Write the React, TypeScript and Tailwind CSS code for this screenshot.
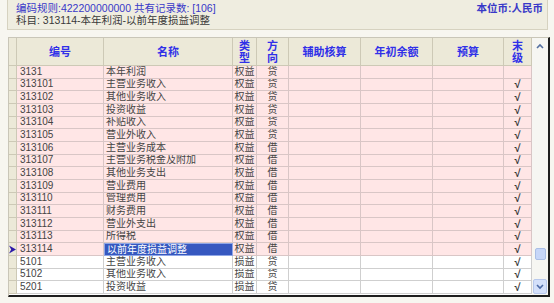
import React from "react";

type Row = { code: string; name: string; type: string; dir: string; leaf: boolean; pink: boolean };

const rows: Row[] = [
  { code: "3131", name: "本年利润", type: "权益", dir: "贷", leaf: false, pink: true },
  { code: "313101", name: "主营业务收入", type: "权益", dir: "贷", leaf: true, pink: true },
  { code: "313102", name: "其他业务收入", type: "权益", dir: "贷", leaf: true, pink: true },
  { code: "313103", name: "投资收益", type: "权益", dir: "贷", leaf: true, pink: true },
  { code: "313104", name: "补贴收入", type: "权益", dir: "贷", leaf: true, pink: true },
  { code: "313105", name: "营业外收入", type: "权益", dir: "贷", leaf: true, pink: true },
  { code: "313106", name: "主营业务成本", type: "权益", dir: "借", leaf: true, pink: true },
  { code: "313107", name: "主营业务税金及附加", type: "权益", dir: "借", leaf: true, pink: true },
  { code: "313108", name: "其他业务支出", type: "权益", dir: "借", leaf: true, pink: true },
  { code: "313109", name: "营业费用", type: "权益", dir: "借", leaf: true, pink: true },
  { code: "313110", name: "管理费用", type: "权益", dir: "借", leaf: true, pink: true },
  { code: "313111", name: "财务费用", type: "权益", dir: "借", leaf: true, pink: true },
  { code: "313112", name: "营业外支出", type: "权益", dir: "借", leaf: true, pink: true },
  { code: "313113", name: "所得税", type: "权益", dir: "借", leaf: true, pink: true },
  { code: "313114", name: "以前年度损益调整", type: "权益", dir: "借", leaf: true, pink: true },
  { code: "5101", name: "主营业务收入", type: "损益", dir: "贷", leaf: true, pink: false },
  { code: "5102", name: "其他业务收入", type: "损益", dir: "贷", leaf: true, pink: false },
  { code: "5201", name: "投资收益", type: "损益", dir: "贷", leaf: true, pink: false },
];

const cols = "grid grid-cols-[8px_87px_129px_24px_32px_72px_72px_71px_28px]";

function HeadCell({ children }: { children?: React.ReactNode }) {
  return (
    <div className="flex items-center justify-center border-r border-b border-[#cdc9b6] bg-[#ece9d8] text-center text-[11px] leading-[12px] font-bold text-[#3030e8]">
      {children}
    </div>
  );
}

export default function App() {
  return (
    <div
      className="w-[554px] h-[303px] overflow-hidden bg-[#f7f6f0] text-[#333]"
      style={{ fontFamily: '"Liberation Sans", "Noto Sans CJK SC", sans-serif' }}
    >
      {/* info panel */}
      <div className="ml-[7px] w-[541px] h-[30px] flex justify-between border-x border-b border-[#d6d2c0] bg-[#efede0] pl-2 pr-1 pt-[2px] text-[10.5px] leading-[12px]">
        <div className="flex flex-col">
          <span className="text-[#3838c8]">编码规则:422200000000 共有记录数: [106]</span>
          <span className="text-[#3a3a3a]">科目: 313114-本年利润-以前年度损益调整</span>
        </div>
        <span className="font-bold text-[#3838c8]">本位币:人民币</span>
      </div>

      {/* grid */}
      <div className="ml-[8px] mt-[7px] w-[542px] h-[260px] flex border-t border-l border-[#c9c6b8] border-r-2 border-b-2 border-r-[#1e1e1e] border-b-[#1e1e1e] bg-white">
        <div className="flex flex-col">
          <div className={`${cols} h-[28px]`}>
            <HeadCell />
            <HeadCell>编号</HeadCell>
            <HeadCell>名称</HeadCell>
            <HeadCell>类<br />型</HeadCell>
            <HeadCell>方<br />向</HeadCell>
            <HeadCell>辅助核算</HeadCell>
            <HeadCell>年初余额</HeadCell>
            <HeadCell>预算</HeadCell>
            <HeadCell>末<br />级</HeadCell>
          </div>
          {rows.map((r) => {
            const sel = r.code === "313114";
            const line = r.pink ? "border-[#d9c6c6]" : "border-[#cfcfcf]";
            const bg = r.pink ? "bg-[#ffe6e6]" : "bg-white";
            const cell = `border-r border-b ${line} ${bg} flex items-center overflow-hidden whitespace-nowrap`;
            return (
              <div key={r.code} className={`${cols} h-[12.67px] text-[10px] leading-[10px] text-[#444]`}>
                <div className="flex items-center justify-center border-r border-b border-[#cdc9b6] bg-[#ece9d8]">
                  {sel && (
                    <svg width="8" height="9" viewBox="0 0 8 9">
                      <path d="M0 0 L8 4.5 L0 9 L2.5 4.5 Z" fill="#2c1aa8" />
                    </svg>
                  )}
                </div>
                <div className={`${cell} pl-[3px]`}>{r.code}</div>
                <div className={sel ? "flex items-center overflow-hidden whitespace-nowrap border border-[#8fa6e6] bg-[#3658c0] pl-[2px] text-white" : `${cell} pl-[2px]`}>
                  {r.name}
                </div>
                <div className={`${cell} justify-center`}>{r.type}</div>
                <div className={`${cell} justify-center`}>{r.dir}</div>
                <div className={cell} />
                <div className={cell} />
                <div className={cell} />
                <div className={`${cell} justify-center text-[11px] font-bold text-[#3a3a3a]`}>{r.leaf ? "√" : ""}</div>
              </div>
            );
          })}
        </div>

        {/* scrollbar */}
        <div className="flex w-[16px] flex-col bg-[#f6f6f2]">
          <div className="flex h-[16px] items-center justify-center">
            <svg width="8" height="6" viewBox="0 0 8 6">
              <path d="M1 5 L4 2 L7 5" stroke="#5570a0" strokeWidth="1.6" fill="none" />
            </svg>
          </div>
          <div className="flex flex-1 flex-col justify-end pb-[19px]">
            <div className="mx-auto h-[12px] w-[11px] rounded-[2px] border border-[#aabfe6] bg-[#c6d6f8]" />
          </div>
          <div className="mx-auto mb-[1px] flex h-[15px] w-[14px] items-center justify-center rounded-[2px] border border-[#b7c8ec] bg-[#d4e0fa]">
            <svg width="8" height="6" viewBox="0 0 8 6">
              <path d="M1 1 L4 4 L7 1" stroke="#4d6aa5" strokeWidth="1.6" fill="none" />
            </svg>
          </div>
        </div>
      </div>
    </div>
  );
}
